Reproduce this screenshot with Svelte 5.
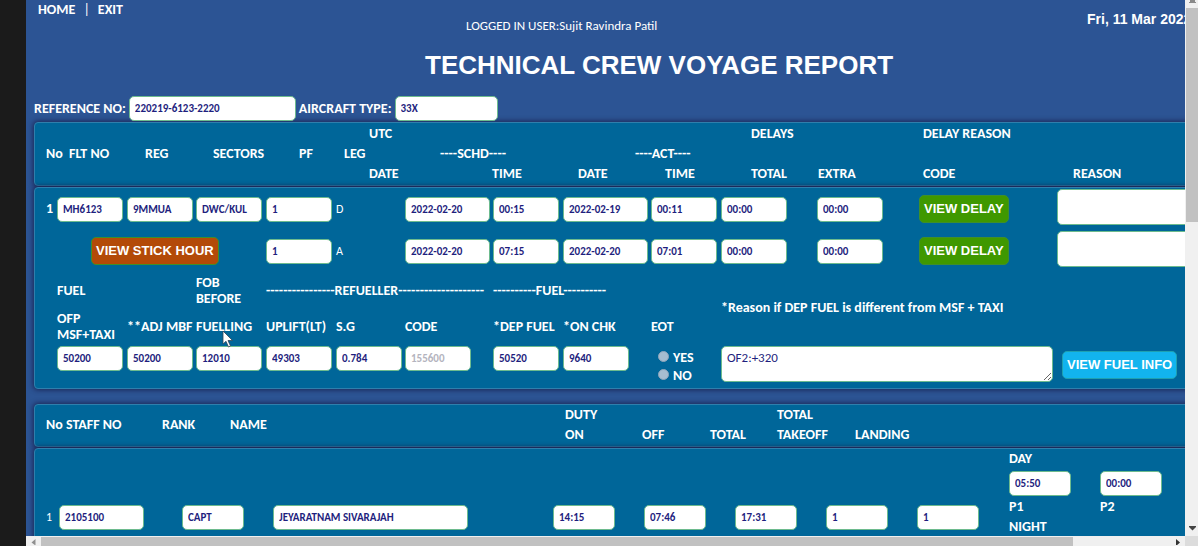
<script>
  const flightHeads = [
    ['No', 1, 2], ['FLT NO', 2, 2], ['REG', 3, 2], ['SECTORS', 4, 2], ['PF', 5, 2], ['LEG', 6, 2],
    ['UTC', 7, 1], ['DATE', 7, 3], ['----SCHD----', 8, 2], ['TIME', 9, 3], ['DATE', 10, 3],
    ['----ACT----', 11, 2], ['TIME', 12, 3], ['DELAYS', 13, 1], ['TOTAL', 13, 3], ['EXTRA', 14, 3],
    ['DELAY REASON', 15, 1], ['CODE', 15, 3], ['REASON', 16, 3]
  ];

  const legs = [
    { row: 1, type: 'D', pf: '1', values: ['2022-02-20', '00:15', '2022-02-19', '00:11', '00:00', '00:00'] },
    { row: 2, type: 'A', pf: '1', values: ['2022-02-20', '07:15', '2022-02-20', '07:01', '00:00', '00:00'] }
  ];
  const legNames = ['Scheduled date', 'Scheduled time', 'Actual date', 'Actual time', 'Total delay', 'Extra delay'];

  const flight = [['Flight number', 'MH6123'], ['Registration', '9MMUA'], ['Sectors', 'DWC/KUL']];

  const fuel = [
    { id: 'ofp', label: 'OFP MSF+TAXI', value: '50200', col: 2 },
    { id: 'adj', label: '**ADJ MBF', value: '50200', col: 3 },
    { id: 'fob', label: 'FUELLING', value: '12010', col: 4 },
    { id: 'uplift', label: 'UPLIFT(LT)', value: '49303', col: 5 },
    { id: 'sg', label: 'S.G', value: '0.784', col: 6 },
    { id: 'code', label: 'CODE', value: '155600', col: 7, off: true },
    { id: 'dep', label: '*DEP FUEL', value: '50520', col: 8 },
    { id: 'chk', label: '*ON CHK', value: '9640', col: 9 }
  ];

  const crew = [
    ['Staff number', '2105100', 'w-date'], ['Rank', 'CAPT', 'w-time'], ['Name', 'JEYARATNAM SIVARAJAH', 'w-name'],
    ['Duty on', '14:15', 'w-time'], ['Duty off', '07:46', 'w-time'], ['Duty total', '17:31', 'w-time'],
    ['Takeoffs', '1', 'w-time'], ['Landings', '1', 'w-time']
  ];

  const periods = [['DAY', '05:50', '00:00'], ['NIGHT']];
</script>

<div class="window">
  <div class="edge"></div>
  <div class="view">
    <main>
      <header>
        <nav><a href="#home">HOME</a><span>|</span><a href="#exit">EXIT</a></nav>
        <p class="user">LOGGED IN USER:Sujit Ravindra Patil</p>
        <p class="today">Fri, 11 Mar 2022</p>
        <h1>TECHNICAL CREW VOYAGE REPORT</h1>
      </header>

      <div class="ident">
        <label for="ref">REFERENCE NO:</label>
        <input id="ref" class="w-ref" value="220219-6123-2220" />
        <label for="type">AIRCRAFT TYPE:</label>
        <input id="type" class="w-type" value="33X" />
      </div>

      <section class="panel heads flight-heads">
        {#each flightHeads as [text, col, row]}
          <span style="grid-area: {row} / {col}">{text}</span>
        {/each}
      </section>

      <section class="panel flight">
        <b class="number">1</b>
        {#each flight as [name, value], i}
          <input aria-label={name} {value} style="grid-area: 1 / {i + 2}" />
        {/each}
        <div class="stick"><button class="brown">VIEW STICK HOUR</button></div>
        {#each legs as leg}
          <input aria-label="PF" value={leg.pf} style="grid-area: {leg.row} / 5" />
          <span class="leg" style="grid-area: {leg.row} / 6">{leg.type}</span>
          {#each leg.values as value, i}
            <input
              aria-label={legNames[i]}
              class={i === 0 || i === 2 ? 'w-date' : ''}
              {value}
              style="grid-area: {leg.row} / {i + 7}"
            />
          {/each}
          <button class="green" style="grid-area: {leg.row} / 13">VIEW DELAY</button>
          <textarea class="reason" aria-label="Delay reason" style="grid-area: {leg.row} / 14"></textarea>
        {/each}

        <span class="g-fuel">FUEL</span>
        <span class="g-fob">FOB<br />BEFORE</span>
        <span class="g-refuel">----------------REFUELLER--------------------</span>
        <span class="g-dep">----------FUEL----------</span>
        <label class="g-why" for="why">*Reason if DEP FUEL is different from MSF + TAXI</label>
        <span class="g-eot" id="eot">EOT</span>

        {#each fuel as f}
          <label for={f.id} class:wrap={f.id === 'ofp'} style="grid-area: 4 / {f.col}">{f.label}</label>
          <input id={f.id} value={f.value} disabled={f.off} class="fuel" style="grid-area: 5 / {f.col}" />
        {/each}

        <div class="eot" role="radiogroup" aria-labelledby="eot">
          <label><input type="radio" name="eot" disabled />YES</label>
          <label><input type="radio" name="eot" disabled />NO</label>
        </div>
        <div class="why">
          <textarea id="why">OF2:+320</textarea>
          <button class="blue">VIEW FUEL INFO</button>
        </div>
      </section>

      <section class="panel heads crew-heads">
        <span class="tall">No</span>
        <span class="tall">STAFF NO</span>
        <span class="tall">RANK</span>
        <span class="tall">NAME</span>
        <span>DUTY<br />ON</span>
        <span class="low">OFF</span>
        <span class="low">TOTAL</span>
        <span>TOTAL<br />TAKEOFF</span>
        <span class="low">LANDING</span>
      </section>

      <section class="panel crew">
        <span class="leg">1</span>
        {#each crew as [name, value, width]}
          <input aria-label={name} {value} class={width} />
        {/each}
        <div class="hours">
          {#each periods as [name, p1, p2], i}
            <span class="period">{name}</span>
            {#if p1}
              <input id="p1-{i}" class="w-time" value={p1} />
              <input id="p2-{i}" class="w-time" value={p2} />
              <label for="p1-{i}">P1</label>
              <label for="p2-{i}">P2</label>
            {/if}
          {/each}
        </div>
      </section>
    </main>
  </div>

  <div class="vbar">
    <svg width="13" height="8" viewBox="0 0 13 8"><path d="M5 0h5v2h1v1h-7v-1h1z" fill="#8a8a8a" /></svg>
    <i></i>
    <svg class="end" width="13" height="11" viewBox="0 0 13 11"><path d="M4 1h7v1L7.500 5.500 4 2z" fill="#444" /></svg>
  </div>
  <div class="hbar">
    <svg width="15" height="9" viewBox="0 0 15 9"><path d="M9.500 3v6.500L5.500 6.500z" fill="#8f8f8f" /></svg>
    <i></i>
    <svg class="end" width="13" height="9" viewBox="0 0 13 9"><path d="M4 3v7l4-3.500z" fill="#333" /></svg>
  </div>
  <div class="corner"></div>

  <svg class="pointer" width="12" height="18" viewBox="0 0 12 18">
    <path d="M1 1v13l3-2.700 2.500 5.700 2-1-2.500-5.500h4.500z" fill="#fff" stroke="#345" stroke-width=".8" />
  </svg>
</div>

<style>
  :global(body) {
    margin: 0;
  }

  .window {
    display: grid;
    grid-template: minmax(0, 1fr) 10px / 26px minmax(0, 1fr) 13px;
    height: 100vh;
    overflow: hidden;
    position: relative;
    background: #1b1b1b;
    color: #fff;
    font: bold 14px/20px Calibri, Carlito, Lato, sans-serif;
  }

  .edge {
    grid-row: 1 / 3;
  }

  .view {
    overflow: hidden;
    background: #2c5494;
  }

  main {
    width: 1280px;
    box-sizing: border-box;
    padding-left: 8px;
  }

  p,
  h1 {
    margin: 0;
  }

  header {
    display: grid;
    grid-template-columns: 432px 621px 1fr;
    grid-template-rows: 20px 16px 54px;
    height: 96px;
    white-space: nowrap;
  }

  nav {
    display: flex;
    gap: 8px;
    padding-left: 4px;
  }

  nav span {
    font-weight: normal;
  }

  a {
    color: inherit;
    text-decoration: none;
  }

  .user {
    grid-area: 1 / 2 / 3;
    padding-top: 16px;
    font-size: 13px;
    font-weight: normal;
  }

  .today {
    grid-area: 1 / 3 / 3;
    padding-top: 9px;
    font: bold 14px/20px 'Liberation Sans', Arial, sans-serif;
  }

  h1 {
    grid-area: 3 / 1 / 4 / 4;
    padding-left: 391px;
    font: bold 26px/58px 'Liberation Sans', Arial, sans-serif;
  }

  .ident {
    display: flex;
    align-items: center;
    gap: 3px;
    padding-bottom: 1px;
  }

  input,
  textarea {
    box-sizing: border-box;
    width: 66px;
    height: 25px;
    margin: 0;
    padding: 0 5px;
    border: 1px solid #6dbb8e;
    border-radius: 5px;
    background: #fff;
    color: #1f1f7e;
    font: bold 11px/20px Calibri, Carlito, Lato, sans-serif;
  }

  input:disabled {
    color: #b4b4be;
  }

  .w-ref {
    width: 167px;
  }

  .w-type {
    width: 103px;
  }

  .w-date {
    width: 85px;
  }

  .w-time {
    width: 62px;
  }

  .w-name {
    width: 195px;
  }

  .panel {
    display: grid;
    box-sizing: border-box;
    margin-bottom: 1px;
    padding-left: 11px;
    border: 1px solid #2f7fac;
    border-radius: 4px;
    background: #069;
    box-shadow: 0 0 5px 1px rgba(20, 20, 60, 0.7);
    white-space: nowrap;
  }

  .flight-heads {
    grid-template-columns: 23px 76px 68px 86px 45px 25px 71px 52px 86px 57px 30px 86px 67px 105px 150px 1fr;
    grid-template-rows: repeat(3, 20px);
    padding-top: 1px;
    padding-bottom: 1px;
  }

  .heads span {
    width: 0;
  }

  .flight {
    grid-template-columns: 11px 70px 69px 70px 70px 69px 88px 70px 88px 70px 96px 102px 138px 1fr;
    grid-template-rows: 42px 42px 38px 34px 44px;
    align-items: center;
    margin-bottom: 15px;
  }

  .number {
    grid-area: 1 / 1;
  }

  .leg {
    font-size: 12px;
    font-weight: normal;
  }

  .stick {
    grid-area: 2 / 2 / 3 / 5;
    padding-left: 34px;
  }

  button {
    justify-self: start;
    height: 28px;
    padding: 0 4px;
    border: 1px solid #3f8f2a;
    border-radius: 5px;
    color: #fff;
    font: bold 13px/20px 'Liberation Sans', Arial, sans-serif;
    white-space: nowrap;
  }

  .brown {
    background: #b34a08;
  }

  .green {
    background: #3f9800;
  }

  .blue {
    border-color: #1fa0b0;
    background: #12b4ee;
  }

  .reason {
    align-self: start;
    width: 200px;
    height: 36px;
    margin-top: 1px;
    resize: none;
  }

  .flight > span,
  .flight > label {
    width: 0;
    line-height: 16px;
  }

  .flight > label.wrap {
    width: 66px;
    white-space: normal;
  }

  .g-fuel {
    grid-area: 3 / 2;
  }

  .g-fob {
    grid-area: 3 / 4;
  }

  .g-refuel {
    grid-area: 3 / 5;
  }

  .g-dep {
    grid-area: 3 / 8;
  }

  .g-why {
    grid-area: 3 / 11 / 5;
  }

  .g-eot {
    grid-area: 4 / 10;
  }

  .fuel,
  .eot,
  .why {
    align-self: start;
    margin-top: 2px;
  }

  .eot {
    grid-area: 5 / 10;
    padding-left: 7px;
  }

  .eot label {
    display: flex;
    gap: 4px;
    height: 18px;
    line-height: 24px;
  }

  .eot input {
    appearance: none;
    width: 11px;
    height: 11px;
    margin-top: 5px;
    padding: 0;
    border: 1px solid #8fa6bb;
    border-radius: 50%;
    background: #a6bdd0;
  }

  .why {
    grid-area: 5 / 11 / 6 / 15;
    display: flex;
    align-items: flex-end;
    gap: 9px;
  }

  .why textarea {
    width: 332px;
    height: 36px;
    padding-top: 1px;
    font-size: 13px;
    font-weight: normal;
    resize: both;
  }

  .why button {
    margin-bottom: 3px;
  }

  .crew-heads {
    grid-template-columns: 20px 96px 68px 335px 77px 68px 67px 78px 1fr;
    padding-bottom: 1px;
  }

  .tall {
    align-self: center;
  }

  .low {
    align-self: end;
  }

  .crew {
    grid-template-columns: 13px 123px 91px 280px repeat(4, 91px) 92px 1fr;
    grid-template-rows: 136px;
    align-items: center;
  }

  .hours {
    display: grid;
    grid-template-columns: 91px 1fr;
    grid-template-rows: 20px 28px 20px 20px;
    align-items: center;
    align-self: start;
  }

  .period {
    grid-column: 1 / 3;
  }

  .vbar,
  .hbar {
    display: flex;
    background: #f0f0f0;
  }

  .vbar {
    grid-area: 1 / 3;
    flex-direction: column;
  }

  .vbar i {
    height: 40%;
    margin-left: 1px;
    background: #c1c1c1;
  }

  .hbar {
    grid-area: 2 / 2;
  }

  .hbar i {
    width: 89%;
    margin-top: 1px;
    background: #c1c1c1;
  }

  .vbar .end {
    margin-top: auto;
  }

  .hbar .end {
    margin-left: auto;
  }

  .corner {
    grid-area: 2 / 3;
    background: #dcdcdc;
  }

  .pointer {
    position: absolute;
    left: 222px;
    top: 330px;
  }
</style>
